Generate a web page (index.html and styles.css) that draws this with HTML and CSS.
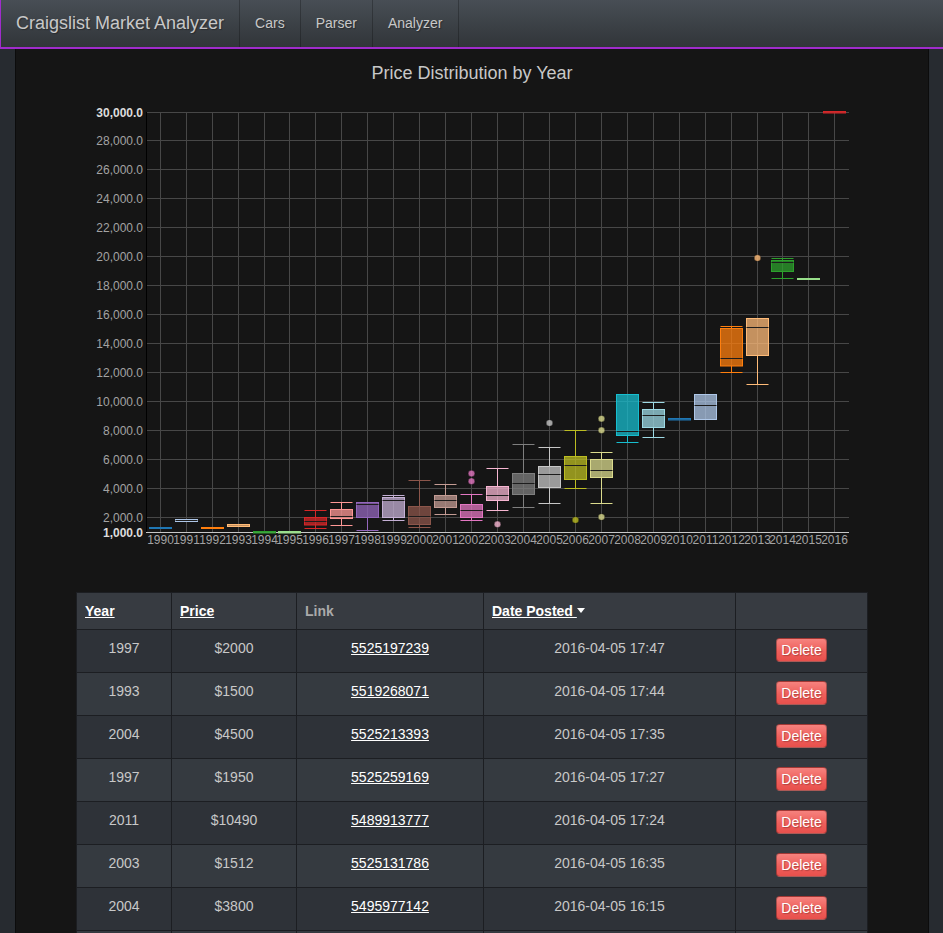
FILE: index.html
```html
<!DOCTYPE html>
<html lang="en">
<head>
<meta charset="utf-8">
<title>Craigslist Market Analyzer</title>
<link rel="stylesheet" href="styles.css">
</head>
<body>
<nav class="navbar">
  <a class="brand" href="#">Craigslist Market Analyzer</a>
  <ul class="nav">
    <li><a href="#">Cars</a></li>
    <li><a href="#">Parser</a></li>
    <li><a href="#">Analyzer</a></li>
  </ul>
</nav>
<main class="page">
  <h2 class="chart-title">Price Distribution by Year</h2>
  <svg class="chart" width="912" height="477" viewBox="16 83 912 477" xmlns="http://www.w3.org/2000/svg">
    <g class="grid">
      <line x1="147" y1="112.5" x2="849" y2="112.5"/>
      <line x1="147" y1="140.5" x2="849" y2="140.5"/>
      <line x1="147" y1="169.5" x2="849" y2="169.5"/>
      <line x1="147" y1="198.5" x2="849" y2="198.5"/>
      <line x1="147" y1="227.5" x2="849" y2="227.5"/>
      <line x1="147" y1="256.5" x2="849" y2="256.5"/>
      <line x1="147" y1="285.5" x2="849" y2="285.5"/>
      <line x1="147" y1="314.5" x2="849" y2="314.5"/>
      <line x1="147" y1="343.5" x2="849" y2="343.5"/>
      <line x1="147" y1="372.5" x2="849" y2="372.5"/>
      <line x1="147" y1="401.5" x2="849" y2="401.5"/>
      <line x1="147" y1="430.5" x2="849" y2="430.5"/>
      <line x1="147" y1="459.5" x2="849" y2="459.5"/>
      <line x1="147" y1="488.5" x2="849" y2="488.5"/>
      <line x1="147" y1="517.5" x2="849" y2="517.5"/>
      <line x1="160.5" y1="112" x2="160.5" y2="532"/>
      <line x1="186.5" y1="112" x2="186.5" y2="532"/>
      <line x1="212.5" y1="112" x2="212.5" y2="532"/>
      <line x1="238.5" y1="112" x2="238.5" y2="532"/>
      <line x1="264.5" y1="112" x2="264.5" y2="532"/>
      <line x1="289.5" y1="112" x2="289.5" y2="532"/>
      <line x1="315.5" y1="112" x2="315.5" y2="532"/>
      <line x1="341.5" y1="112" x2="341.5" y2="532"/>
      <line x1="367.5" y1="112" x2="367.5" y2="532"/>
      <line x1="393.5" y1="112" x2="393.5" y2="532"/>
      <line x1="419.5" y1="112" x2="419.5" y2="532"/>
      <line x1="445.5" y1="112" x2="445.5" y2="532"/>
      <line x1="471.5" y1="112" x2="471.5" y2="532"/>
      <line x1="497.5" y1="112" x2="497.5" y2="532"/>
      <line x1="523.5" y1="112" x2="523.5" y2="532"/>
      <line x1="549.5" y1="112" x2="549.5" y2="532"/>
      <line x1="575.5" y1="112" x2="575.5" y2="532"/>
      <line x1="601.5" y1="112" x2="601.5" y2="532"/>
      <line x1="627.5" y1="112" x2="627.5" y2="532"/>
      <line x1="653.5" y1="112" x2="653.5" y2="532"/>
      <line x1="679.5" y1="112" x2="679.5" y2="532"/>
      <line x1="705.5" y1="112" x2="705.5" y2="532"/>
      <line x1="731.5" y1="112" x2="731.5" y2="532"/>
      <line x1="757.5" y1="112" x2="757.5" y2="532"/>
      <line x1="782.5" y1="112" x2="782.5" y2="532"/>
      <line x1="808.5" y1="112" x2="808.5" y2="532"/>
      <line x1="834.5" y1="112" x2="834.5" y2="532"/>
    </g>
    <line class="yaxis" x1="146.5" y1="112" x2="146.5" y2="532"/>
    <line class="xaxis" x1="146" y1="532.5" x2="849" y2="532.5"/>
    <g class="ylabels">
      <text class="edge" x="143" y="117">30,000.0</text>
      <text x="143" y="145">28,000.0</text>
      <text x="143" y="174">26,000.0</text>
      <text x="143" y="203">24,000.0</text>
      <text x="143" y="232">22,000.0</text>
      <text x="143" y="261">20,000.0</text>
      <text x="143" y="290">18,000.0</text>
      <text x="143" y="319">16,000.0</text>
      <text x="143" y="348">14,000.0</text>
      <text x="143" y="377">12,000.0</text>
      <text x="143" y="406">10,000.0</text>
      <text x="143" y="435">8,000.0</text>
      <text x="143" y="464">6,000.0</text>
      <text x="143" y="493">4,000.0</text>
      <text x="143" y="522">2,000.0</text>
      <text class="edge" x="143" y="537">1,000.0</text>
    </g>
    <g class="xlabels">
      <text x="160.5" y="544">1990</text>
      <text x="186.5" y="544">1991</text>
      <text x="212.5" y="544">1992</text>
      <text x="238.5" y="544">1993</text>
      <text x="264.5" y="544">1994</text>
      <text x="289.5" y="544">1995</text>
      <text x="315.5" y="544">1996</text>
      <text x="341.5" y="544">1997</text>
      <text x="367.5" y="544">1998</text>
      <text x="393.5" y="544">1999</text>
      <text x="419.5" y="544">2000</text>
      <text x="445.5" y="544">2001</text>
      <text x="471.5" y="544">2002</text>
      <text x="497.5" y="544">2003</text>
      <text x="523.5" y="544">2004</text>
      <text x="549.5" y="544">2005</text>
      <text x="575.5" y="544">2006</text>
      <text x="601.5" y="544">2007</text>
      <text x="627.5" y="544">2008</text>
      <text x="653.5" y="544">2009</text>
      <text x="679.5" y="544">2010</text>
      <text x="705.5" y="544">2011</text>
      <text x="731.5" y="544">2012</text>
      <text x="757.5" y="544">2013</text>
      <text x="782.5" y="544">2014</text>
      <text x="808.5" y="544">2015</text>
      <text x="834.5" y="544">2016</text>
    </g>
    <g class="boxes">
      <g class="bx k0"><rect x="149.5" y="527.5" width="22" height="1"/></g>
      <g class="bx k1"><rect x="175.5" y="519.5" width="22" height="2"/><line class="med" x1="175.5" y1="520.5" x2="197.5" y2="520.5"/></g>
      <g class="bx k2"><rect x="201.5" y="527.5" width="22" height="1"/></g>
      <g class="bx k3"><rect x="227.5" y="524.5" width="22" height="2"/></g>
      <g class="bx k4"><rect x="253.5" y="531.5" width="22" height="1.5"/></g>
      <g class="bx k5"><rect x="278.5" y="531.5" width="22" height="1.5"/></g>
      <g class="bx k6">
        <line x1="315.5" y1="510.5" x2="315.5" y2="517.5"/><line x1="304.5" y1="510.5" x2="326.5" y2="510.5"/>
        <line x1="315.5" y1="525" x2="315.5" y2="528.5"/><line x1="304.5" y1="528.5" x2="326.5" y2="528.5"/>
        <rect x="304.5" y="517.5" width="22" height="7.5"/><line class="med" x1="304.5" y1="521.5" x2="326.5" y2="521.5"/>
      </g>
      <g class="bx k7">
        <line x1="341.5" y1="502.5" x2="341.5" y2="509.5"/><line x1="330.5" y1="502.5" x2="352.5" y2="502.5"/>
        <line x1="341.5" y1="518.5" x2="341.5" y2="525.5"/><line x1="330.5" y1="525.5" x2="352.5" y2="525.5"/>
        <rect x="330.5" y="509.5" width="22" height="9"/><line class="med" x1="330.5" y1="516.5" x2="352.5" y2="516.5"/>
      </g>
      <g class="bx k8">
        <line x1="356.5" y1="502.5" x2="378.5" y2="502.5"/>
        <line x1="367.5" y1="517.5" x2="367.5" y2="530.5"/><line x1="356.5" y1="530.5" x2="378.5" y2="530.5"/>
        <rect x="356.5" y="502.5" width="22" height="15"/><line class="med" x1="356.5" y1="504.5" x2="378.5" y2="504.5"/>
      </g>
      <g class="bx k9">
        <line x1="393.5" y1="495.5" x2="393.5" y2="497.5"/><line x1="382.5" y1="495.5" x2="404.5" y2="495.5"/>
        <line x1="393.5" y1="517.5" x2="393.5" y2="520.5"/><line x1="382.5" y1="520.5" x2="404.5" y2="520.5"/>
        <rect x="382.5" y="497.5" width="22" height="20"/><line class="med" x1="382.5" y1="500.5" x2="404.5" y2="500.5"/>
      </g>
      <g class="bx k10">
        <line x1="419.5" y1="480.5" x2="419.5" y2="506.5"/><line x1="408.5" y1="480.5" x2="430.5" y2="480.5"/>
        <line x1="419.5" y1="524.5" x2="419.5" y2="527.5"/><line x1="408.5" y1="527.5" x2="430.5" y2="527.5"/>
        <rect x="408.5" y="506.5" width="22" height="18"/><line class="med" x1="408.5" y1="516.5" x2="430.5" y2="516.5"/>
      </g>
      <g class="bx k11">
        <line x1="445.5" y1="484.5" x2="445.5" y2="495.5"/><line x1="434.5" y1="484.5" x2="456.5" y2="484.5"/>
        <line x1="445.5" y1="507.5" x2="445.5" y2="514.5"/><line x1="434.5" y1="514.5" x2="456.5" y2="514.5"/>
        <rect x="434.5" y="495.5" width="22" height="12"/><line class="med" x1="434.5" y1="500.5" x2="456.5" y2="500.5"/>
      </g>
      <g class="bx k12">
        <line x1="471.5" y1="494.5" x2="471.5" y2="504.5"/><line x1="460.5" y1="494.5" x2="482.5" y2="494.5"/>
        <line x1="471.5" y1="517.5" x2="471.5" y2="520.5"/><line x1="460.5" y1="520.5" x2="482.5" y2="520.5"/>
        <rect x="460.5" y="504.5" width="22" height="13"/><line class="med" x1="460.5" y1="510.5" x2="482.5" y2="510.5"/>
        <circle cx="471.5" cy="473.5" r="3.3"/><circle cx="471.5" cy="481.2" r="3.3"/>
      </g>
      <g class="bx k13">
        <line x1="497.5" y1="468.5" x2="497.5" y2="486.5"/><line x1="486.5" y1="468.5" x2="508.5" y2="468.5"/>
        <line x1="497.5" y1="500.5" x2="497.5" y2="510.5"/><line x1="486.5" y1="510.5" x2="508.5" y2="510.5"/>
        <rect x="486.5" y="486.5" width="22" height="14"/><line class="med" x1="486.5" y1="495.5" x2="508.5" y2="495.5"/>
        <circle cx="497.5" cy="524.3" r="3.3"/>
      </g>
      <g class="bx k14">
        <line x1="523.5" y1="444.5" x2="523.5" y2="473.5"/><line x1="512.5" y1="444.5" x2="534.5" y2="444.5"/>
        <line x1="523.5" y1="494.5" x2="523.5" y2="507.5"/><line x1="512.5" y1="507.5" x2="534.5" y2="507.5"/>
        <rect x="512.5" y="473.5" width="22" height="21"/><line class="med" x1="512.5" y1="483.5" x2="534.5" y2="483.5"/>
      </g>
      <g class="bx k15">
        <line x1="549.5" y1="447.5" x2="549.5" y2="466.5"/><line x1="538.5" y1="447.5" x2="560.5" y2="447.5"/>
        <line x1="549.5" y1="487.5" x2="549.5" y2="503.5"/><line x1="538.5" y1="503.5" x2="560.5" y2="503.5"/>
        <rect x="538.5" y="466.5" width="22" height="21"/><line class="med" x1="538.5" y1="474.5" x2="560.5" y2="474.5"/>
        <circle cx="549.5" cy="423" r="3.3"/>
      </g>
      <g class="bx k16">
        <line x1="575.5" y1="430.5" x2="575.5" y2="456.5"/><line x1="564.5" y1="430.5" x2="586.5" y2="430.5"/>
        <line x1="575.5" y1="479.5" x2="575.5" y2="488.5"/><line x1="564.5" y1="488.5" x2="586.5" y2="488.5"/>
        <rect x="564.5" y="456.5" width="22" height="23"/><line class="med" x1="564.5" y1="465.5" x2="586.5" y2="465.5"/>
        <circle cx="575.5" cy="520" r="3.3"/>
      </g>
      <g class="bx k17">
        <line x1="601.5" y1="452.5" x2="601.5" y2="459.5"/><line x1="590.5" y1="452.5" x2="612.5" y2="452.5"/>
        <line x1="601.5" y1="477.5" x2="601.5" y2="503.5"/><line x1="590.5" y1="503.5" x2="612.5" y2="503.5"/>
        <rect x="590.5" y="459.5" width="22" height="18"/><line class="med" x1="590.5" y1="470.5" x2="612.5" y2="470.5"/>
        <circle cx="601.5" cy="418.7" r="3.3"/><circle cx="601.5" cy="430.3" r="3.3"/><circle cx="601.5" cy="517" r="3.3"/>
      </g>
      <g class="bx k18">
        <line x1="627.5" y1="435.5" x2="627.5" y2="442.5"/><line x1="616.5" y1="442.5" x2="638.5" y2="442.5"/>
        <rect x="616.5" y="394.5" width="22" height="41"/><line class="med" x1="616.5" y1="431.5" x2="638.5" y2="431.5"/>
      </g>
      <g class="bx k19">
        <line x1="653.5" y1="402.5" x2="653.5" y2="409.5"/><line x1="642.5" y1="402.5" x2="664.5" y2="402.5"/>
        <line x1="653.5" y1="427.5" x2="653.5" y2="437.5"/><line x1="642.5" y1="437.5" x2="664.5" y2="437.5"/>
        <rect x="642.5" y="409.5" width="22" height="18"/><line class="med" x1="642.5" y1="415.5" x2="664.5" y2="415.5"/>
      </g>
      <g class="bx k0"><rect x="668.5" y="418.5" width="22" height="1.5"/></g>
      <g class="bx k1">
        <rect x="694.5" y="394.5" width="22" height="25"/><line class="med" x1="694.5" y1="405.5" x2="716.5" y2="405.5"/>
      </g>
      <g class="bx k2">
        <line x1="731.5" y1="326.5" x2="731.5" y2="328.5"/><line x1="720.5" y1="326.5" x2="742.5" y2="326.5"/>
        <line x1="731.5" y1="366" x2="731.5" y2="372.5"/><line x1="720.5" y1="372.5" x2="742.5" y2="372.5"/>
        <rect x="720.5" y="328.5" width="22" height="37.5"/><line class="med" x1="720.5" y1="358.5" x2="742.5" y2="358.5"/>
      </g>
      <g class="bx k3">
        <line x1="746.5" y1="318.5" x2="768.5" y2="318.5"/>
        <line x1="757.5" y1="355.5" x2="757.5" y2="384.5"/><line x1="746.5" y1="384.5" x2="768.5" y2="384.5"/>
        <rect x="746.5" y="318.5" width="22" height="37"/><line class="med" x1="746.5" y1="327.5" x2="768.5" y2="327.5"/>
        <circle cx="757.5" cy="258" r="3.3"/>
      </g>
      <g class="bx k4">
        <line x1="782.5" y1="258.5" x2="782.5" y2="260.5"/><line x1="771.5" y1="258.5" x2="793.5" y2="258.5"/>
        <line x1="782.5" y1="271.5" x2="782.5" y2="278.5"/><line x1="771.5" y1="278.5" x2="793.5" y2="278.5"/>
        <rect x="771.5" y="260.5" width="22" height="11"/><line class="med" x1="771.5" y1="262.5" x2="793.5" y2="262.5"/>
      </g>
      <g class="bx k5"><rect x="797.5" y="278.5" width="22" height="1"/></g>
      <g class="bx k6"><rect x="823.5" y="111.5" width="22" height="1.5"/></g>
    </g>
  </svg>

  <table class="listings">
    <colgroup>
      <col class="c-year"><col class="c-price"><col class="c-link"><col class="c-date"><col class="c-act">
    </colgroup>
    <thead>
      <tr>
        <th><a href="#">Year</a></th>
        <th><a href="#">Price</a></th>
        <th class="plain">Link</th>
        <th><a href="#">Date Posted <span class="caret"></span></a></th>
        <th></th>
      </tr>
    </thead>
    <tbody>
      <tr><td>1997</td><td>$2000</td><td><a href="#">5525197239</a></td><td>2016-04-05 17:47</td><td><button class="btn-danger">Delete</button></td></tr>
      <tr><td>1993</td><td>$1500</td><td><a href="#">5519268071</a></td><td>2016-04-05 17:44</td><td><button class="btn-danger">Delete</button></td></tr>
      <tr><td>2004</td><td>$4500</td><td><a href="#">5525213393</a></td><td>2016-04-05 17:35</td><td><button class="btn-danger">Delete</button></td></tr>
      <tr><td>1997</td><td>$1950</td><td><a href="#">5525259169</a></td><td>2016-04-05 17:27</td><td><button class="btn-danger">Delete</button></td></tr>
      <tr><td>2011</td><td>$10490</td><td><a href="#">5489913777</a></td><td>2016-04-05 17:24</td><td><button class="btn-danger">Delete</button></td></tr>
      <tr><td>2003</td><td>$1512</td><td><a href="#">5525131786</a></td><td>2016-04-05 16:35</td><td><button class="btn-danger">Delete</button></td></tr>
      <tr><td>2004</td><td>$3800</td><td><a href="#">5495977142</a></td><td>2016-04-05 16:15</td><td><button class="btn-danger">Delete</button></td></tr>
      <tr><td>2006</td><td>$5500</td><td><a href="#">5525077630</a></td><td>2016-04-05 15:58</td><td><button class="btn-danger">Delete</button></td></tr>
    </tbody>
  </table>
</main>
</body>
</html>
```
FILE: styles.css
```css
html, body {
  margin: 0;
  padding: 0;
  height: 100%;
  overflow: hidden;
  background: #272b30;
  color: #c8c8c8;
  font-family: "Liberation Sans", Arial, Helvetica, sans-serif;
  font-size: 14px;
  line-height: 20px;
}

.navbar {
  display: flex;
  align-items: stretch;
  height: 47px;
  background: linear-gradient(#484e55, #3a3f44 60%, #313539);
  border-left: 1px solid #a02ccc;
  border-bottom: 2px solid #a02ccc;
}

.brand {
  display: block;
  padding: 0 15px 0 15px;
  line-height: 47px;
  font-size: 18px;
  color: #c8c8c8;
  text-decoration: none;
  text-shadow: 1px 1px 1px rgba(0, 0, 0, 0.3);
}

.nav {
  display: flex;
  margin: 0;
  padding: 0;
  list-style: none;
}

.nav li {
  display: block;
}

.nav a {
  display: block;
  padding: 0 15px;
  line-height: 47px;
  color: #c8c8c8;
  text-decoration: none;
  border-left: 1px solid rgba(0, 0, 0, 0.25);
  text-shadow: 1px 1px 1px rgba(0, 0, 0, 0.3);
}

.nav li:last-child a {
  padding-right: 16px;
  border-right: 1px solid rgba(0, 0, 0, 0.25);
}

.page {
  margin: 0 14px 0 15px;
  min-height: calc(100% - 49px);
  background: #151515;
  border-left: 1px solid #0c0c0c;
  border-right: 1px solid #0c0c0c;
}

.chart-title {
  margin: 0;
  padding-top: 14px;
  font-size: 18px;
  line-height: 20px;
  font-weight: normal;
  text-align: center;
  color: #c8c8c8;
}

.chart {
  display: block;
}

.grid line {
  stroke: #474747;
  stroke-width: 1;
}

.yaxis {
  stroke: #000;
  stroke-width: 1;
}

.xaxis {
  stroke: #c8c8c8;
  stroke-width: 1;
}

.ylabels text,
.xlabels text {
  font-family: "Liberation Sans", Arial, sans-serif;
  font-size: 12px;
  fill: #a3a3a3;
}

.ylabels text {
  text-anchor: end;
}

.ylabels .edge {
  font-weight: bold;
  fill: #dcdcdc;
}

.xlabels text {
  text-anchor: middle;
}

.bx {
  stroke: currentColor;
  stroke-width: 1;
}

.bx rect {
  fill: currentColor;
  fill-opacity: 0.75;
}

.bx circle {
  fill: currentColor;
  fill-opacity: 0.8;
  stroke: #000;
  stroke-opacity: 0.35;
}

.bx .med {
  stroke: #1c1c1c;
}

.k0 { color: #1f77b4; }
.k1 { color: #aec7e8; }
.k2 { color: #ff7f0e; }
.k3 { color: #ffbb78; }
.k4 { color: #2ca02c; }
.k5 { color: #98df8a; }
.k6 { color: #d62728; }
.k7 { color: #ff9896; }
.k8 { color: #9467bd; }
.k9 { color: #c5b0d5; }
.k10 { color: #8c564b; }
.k11 { color: #c49c94; }
.k12 { color: #e377c2; }
.k13 { color: #f7b6d2; }
.k14 { color: #7f7f7f; }
.k15 { color: #c7c7c7; }
.k16 { color: #bcbd22; }
.k17 { color: #dbdb8d; }
.k18 { color: #17becf; }
.k19 { color: #9edae5; }

.listings {
  width: 791px;
  margin: 32px auto 0;
  table-layout: fixed;
  border-collapse: collapse;
  border: 1px solid #1c1e22;
}

.c-year { width: 95px; }
.c-price { width: 125px; }
.c-link { width: 187px; }
.c-date { width: 252px; }
.c-act { width: 132px; }

.listings th,
.listings td {
  border: 1px solid #1c1e22;
  line-height: 20px;
  vertical-align: top;
}

.listings th {
  padding: 8px;
  text-align: left;
  font-weight: bold;
  background: #373b41;
  color: #aaa;
}

.listings th a {
  color: #fff;
  text-decoration: underline;
}

.listings td {
  padding: 8px;
  text-align: center;
  height: 26px;
}

.listings tbody tr:nth-child(odd) td {
  background: #2e3238;
}

.listings tbody tr:nth-child(even) td {
  background: #353a40;
}

.listings td a {
  color: #fff;
  text-decoration: underline;
}

.caret {
  display: inline-block;
  width: 0;
  height: 0;
  vertical-align: middle;
  border-top: 5px solid #fff;
  border-left: 4px solid transparent;
  border-right: 4px solid transparent;
  margin-left: 0;
  margin-top: -3px;
}

.btn-danger {
  display: inline-block;
  margin-top: 0;
  padding: 1px 4px;
  font-family: "Liberation Sans", Arial, sans-serif;
  font-size: 14px;
  line-height: 20px;
  color: #fff;
  background: linear-gradient(#f6827e, #ee5f5b 55%, #e8504c);
  border: 1px solid rgba(0, 0, 0, 0.3);
  border-radius: 4px;
  text-shadow: 1px 1px 1px rgba(0, 0, 0, 0.25);
  vertical-align: top;
}
```
